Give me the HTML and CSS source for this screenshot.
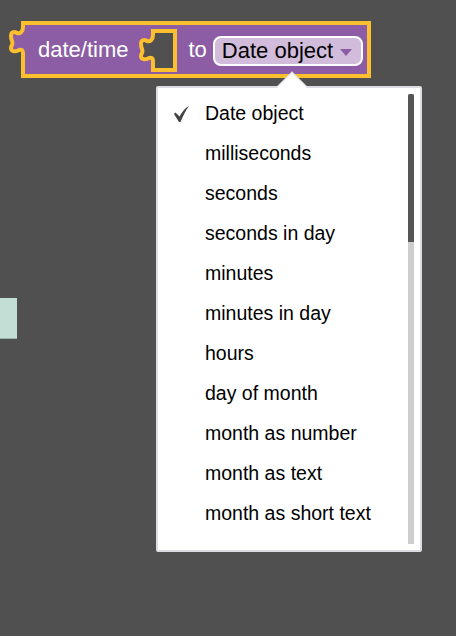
FILE: index.html
```html
<!DOCTYPE html>
<html lang="en">
<head>
    <meta charset="UTF-8">
    <title>date/time block</title>
    <link rel="stylesheet" href="styles.css">
</head>
<body>
    <div class="side_block"></div>

    <div class="block">
        <svg class="tab" width="22" height="34" viewBox="0 0 22 34">
            <path d="M18 3 C18 8 15 10 12 9 C9 7 6 8 6 12 C6 16 7.500 17 7.500 19 C7.500 21 6 22 6 24 C6 27.500 10 28 13 26.500 C15 25.500 18 25 18 29 L21 29 L21 3 Z" fill="#8c5da4"/>
            <path d="M18 3 C18 8 15 10 12 9 C9 7 6 8 6 12 C6 16 7.500 17 7.500 19 C7.500 21 6 22 6 24 C6 27.500 10 28 13 26.500 C15 25.500 18 25 18 29" fill="none" stroke="#fcbf2d" stroke-width="4"/>
        </svg>
        <span class="label">date/time</span>
        <div class="socket">
            <svg class="tab" width="22" height="34" viewBox="0 0 22 34">
                <path d="M18 3 C18 8 15 10 12 9 C9 7 6 8 6 12 C6 16 7.500 17 7.500 19 C7.500 21 6 22 6 24 C6 27.500 10 28 13 26.500 C15 25.500 18 25 18 29 L21 29 L21 3 Z" fill="#505050"/>
                <path d="M18 3 C18 8 15 10 12 9 C9 7 6 8 6 12 C6 16 7.500 17 7.500 19 C7.500 21 6 22 6 24 C6 27.500 10 28 13 26.500 C15 25.500 18 25 18 29" fill="none" stroke="#fcbf2d" stroke-width="4"/>
            </svg>
        </div>
        <span class="label to">to</span>
        <div class="field">
            <span>Date object</span>
            <i class="field_arrow"></i>
        </div>
    </div>

    <div class="menu">
        <i class="menu_arrow"></i>
        <ul class="list">
            <li>
                <svg class="check" width="17" height="18" viewBox="0 0 17 18">
                    <path d="M1 9 L2.500 7.500 L6.500 11.500 C9 7 12 3 16 1 C13 5 10 11 7.500 17 L6 17 Z" fill="#444"/>
                </svg>
                Date object
            </li>
            <li>milliseconds</li>
            <li>seconds</li>
            <li>seconds in day</li>
            <li>minutes</li>
            <li>minutes in day</li>
            <li>hours</li>
            <li>day of month</li>
            <li>month as number</li>
            <li>month as text</li>
            <li>month as short text</li>
        </ul>
        <div class="scroll"><div class="thumb"></div></div>
    </div>
</body>
</html>
```

FILE: styles.css
```css
* {margin: 0; padding: 0; box-sizing: border-box;}
ul,li {list-style: none;}
html,body {height: 100%;}
body {background-color: #505050; font-family: "Liberation Sans", Arial, sans-serif; overflow: hidden;}

.side_block {position: absolute; left: 0; top: 298px; width: 17px; height: 41px;
             background-color: #c1dfd4; border-bottom: 1px solid #9bb5ab;}

.block {position: absolute; left: 21px; top: 21px; width: 350px; height: 57px;
        background-color: #8c5da4; border: 4px solid #fcbf2d;
        display: flex; align-items: center; padding-left: 13px;}
.tab {position: absolute; left: -20px; top: -1px;}
.label {color: #fff; font-size: 22px; line-height: 24px;}
.socket {position: relative; width: 26px; height: 43px; margin-left: 22px; margin-top: 1px;
         background-color: #505050; border: 4px solid #fcbf2d;}
.to {margin-left: 12px;}

.field {display: flex; align-items: center; width: 150px; height: 30px; margin-left: 6px; margin-top: 3px; padding-left: 7px;
        background-color: #d2bcdc; border: 2px solid #fff; border-radius: 8px;
        font-size: 22px; color: #000;}
.field_arrow {width: 0; height: 0; margin-left: 7px; margin-top: 2px;
              border-left: 6px solid transparent; border-right: 6px solid transparent; border-top: 7px solid #8c5da4;}

.menu {position: absolute; left: 156px; top: 86px; width: 266px; height: 466px;
       background-color: #fff; border: 2px solid #dcdce2; border-radius: 2px;}
.menu_arrow {position: absolute; left: 123px; top: -12px; width: 22px; height: 22px;
             background-color: #fff; transform: rotate(45deg);
             border-left: 1px solid #dcdce2; border-top: 1px solid #dcdce2;}
.list {position: relative; padding-top: 5px;}
.list li {position: relative; height: 40px; padding-left: 47px; line-height: 40px; font-size: 19.5px; color: #000;}
.check {position: absolute; left: 15px; top: 12px;}

.scroll {position: absolute; left: 250px; top: 6px; width: 6px; height: 450px; background-color: #cecece;}
.thumb {height: 148px; background-color: #555; border-radius: 2px 2px 0 0;}
```
